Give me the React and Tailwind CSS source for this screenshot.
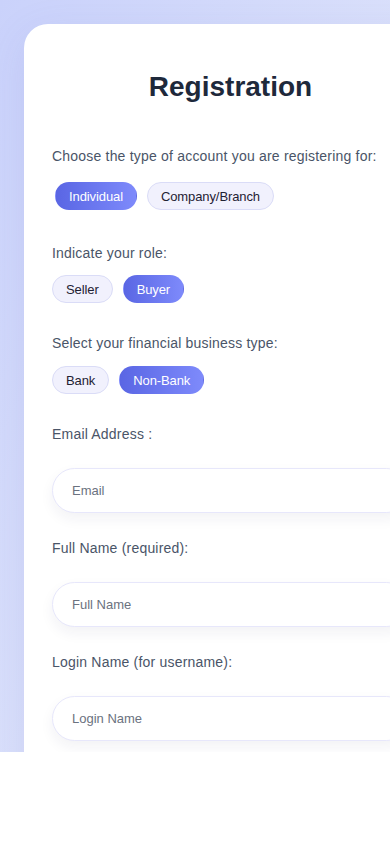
import React from "react";

function Pill({ children, active, className = "" }) {
  return (
    <button
      type="button"
      className={
        "h-[28px] px-[13px] rounded-full border text-[13px] leading-none tracking-[-0.1px] flex items-center " +
        (active
          ? "border-transparent bg-linear-to-r from-[#5a66e4] to-[#7e8afb] text-white "
          : "border-[#dadcf7] bg-[#f1f1fd] text-[#1f2233] ") +
        className
      }
    >
      {children}
    </button>
  );
}

function Label({ children, className = "" }) {
  return (
    <div className={"text-[14px] leading-[20px] tracking-[0.2px] text-[#4a5568] " + className}>
      {children}
    </div>
  );
}

function Field({ label, placeholder, className = "" }) {
  return (
    <div className={className}>
      <Label>{label}</Label>
      <div className="mt-[24px] h-[45px] rounded-full border border-[#e7e7fb] bg-white shadow-[0_6px_14px_rgba(30,40,90,0.06)] flex items-center pl-[19px]">
        <span className="text-[13px] text-[#6b7280]">{placeholder}</span>
      </div>
    </div>
  );
}

export default function App() {
  return (
    <div
      className="h-[752px] overflow-hidden bg-linear-to-br from-[#cad2fb] to-[#e9edfa] pt-[24px] pl-[24px]"
      style={{ fontFamily: '"Liberation Sans", Arial, sans-serif' }}
    >
      <div className="w-[413px] min-h-[800px] bg-white rounded-tl-[24px] px-[28px] pt-[45px] shadow-[0_10px_40px_rgba(90,100,200,0.12)]">
        <h1 className="text-center text-[28px] leading-[36px] font-bold text-[#1e293b]">
          Registration
        </h1>

        <Label className="mt-[41px]">
          Choose the type of account you are registering for:
        </Label>
        <div className="mt-[16px] flex gap-[10px]">
          <Pill active className="ml-[3px]">Individual</Pill>
          <Pill>Company/Branch</Pill>
        </div>

        <Label className="mt-[33px]">Indicate your role:</Label>
        <div className="mt-[12px] flex gap-[10px]">
          <Pill>Seller</Pill>
          <Pill active>Buyer</Pill>
        </div>

        <Label className="mt-[30px]">Select your financial business type:</Label>
        <div className="mt-[13px] flex gap-[10px]">
          <Pill>Bank</Pill>
          <Pill active>Non-Bank</Pill>
        </div>

        <Field className="mt-[30px]" label="Email Address :" placeholder="Email" />
        <Field className="mt-[25px]" label="Full Name (required):" placeholder="Full Name" />
        <Field className="mt-[25px]" label="Login Name (for username):" placeholder="Login Name" />
      </div>
    </div>
  );
}
